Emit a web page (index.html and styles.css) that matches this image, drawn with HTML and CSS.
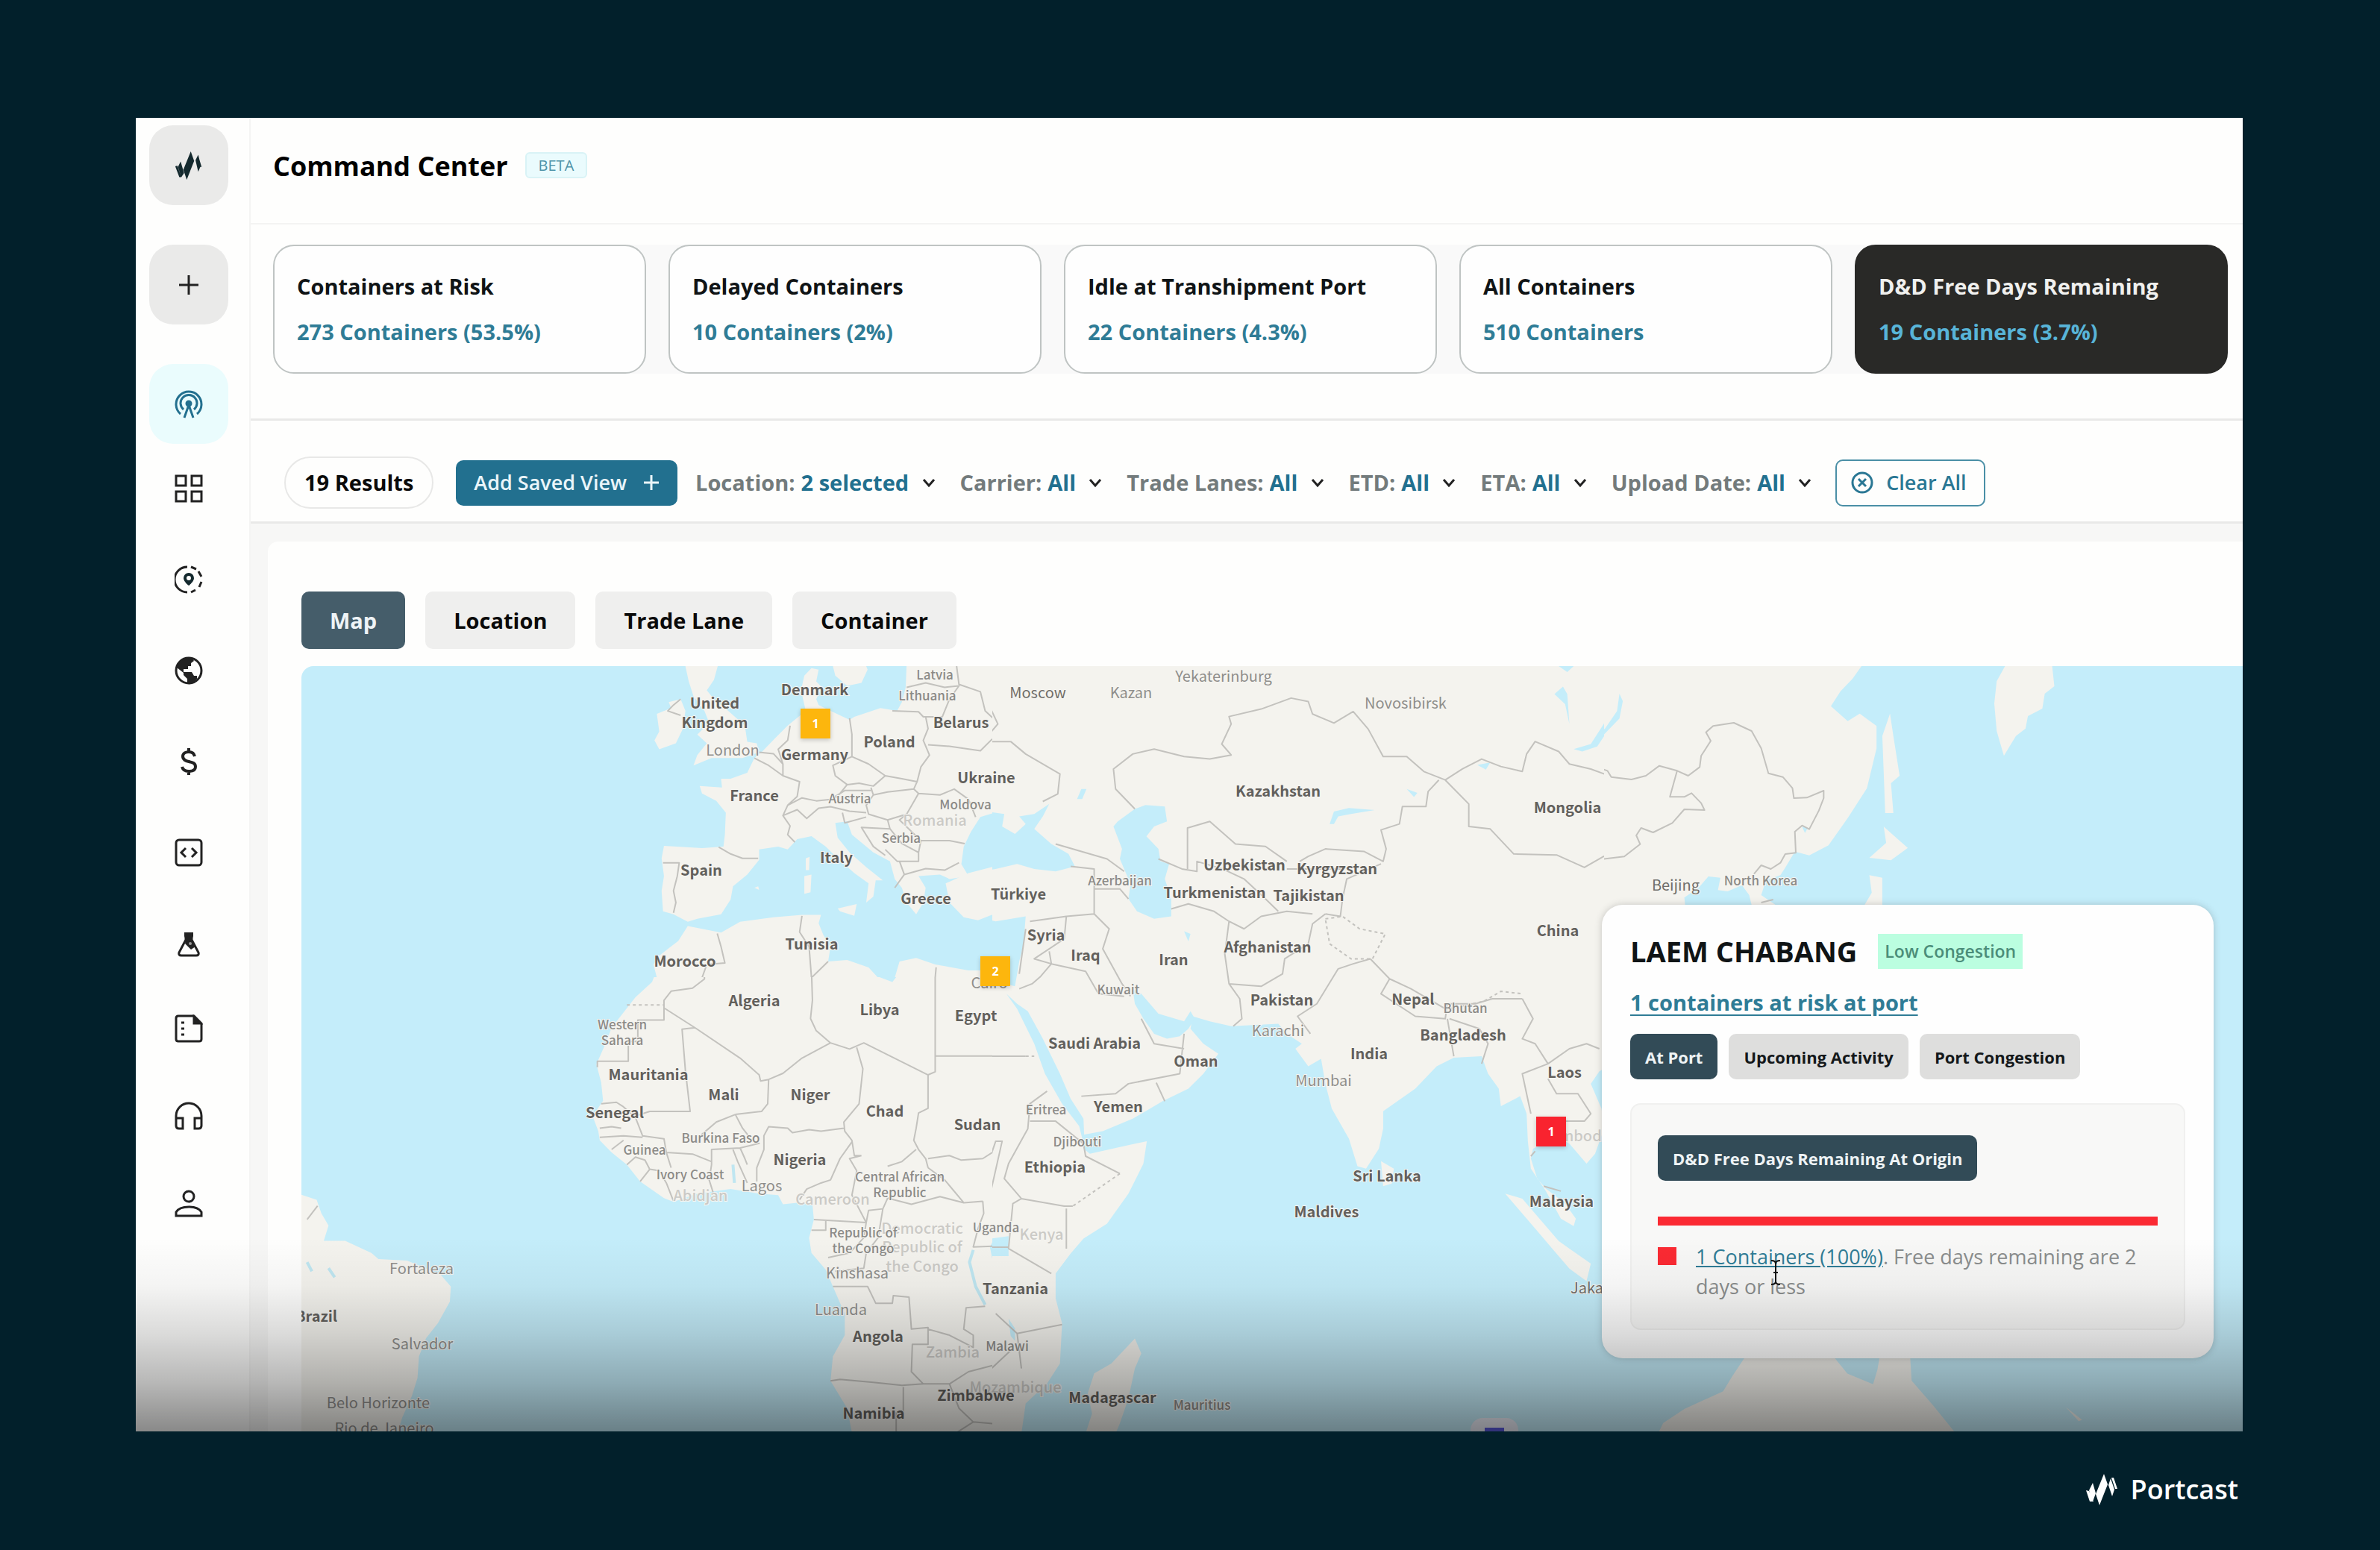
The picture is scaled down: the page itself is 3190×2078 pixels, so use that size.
FILE: index.html
```html
<!DOCTYPE html>
<html lang="en">
<head>
<meta charset="utf-8">
<title>Command Center – Portcast</title>
<link rel="stylesheet" href="styles.css">
</head>
<body>
<div class="app">
  <nav class="sidebar" aria-label="Main">
    <a class="tile" href="#home" aria-label="Home"><svg viewBox="0 0 42 42" class="icon"><path d="M1 22l6 16h3L4 21zM9 15l5 17-4 6-5-15zM24 0l5 14-11 28-5-15zM35 6l5 17-3 0-4-14zM35 30l-4-17 4-8 4 16z" fill="#14292e"/></svg></a>
    <a class="tile" href="#new" aria-label="Add"><svg viewBox="0 0 28 28" class="icon-plus"><path d="M14 1v26M1 14h26" stroke="#222" stroke-width="3"/></svg></a>
    <a class="tile tile-active" href="#command" aria-label="Command Center"><svg viewBox="0 0 38 38" class="icon line"><path d="M8 32A17 17 0 1 1 30 32M12 26A11 11 0 1 1 26 26M13 37l6-17 6 17"/><circle cx="19" cy="18" r="3" fill="currentColor"/></svg></a>
    <div class="nav-group">
      <a href="#board" aria-label="Dashboard"><svg viewBox="0 0 38 38" class="icon line"><path d="M2 2h13v13H2zM23 2h13v13H23zM2 23h13v13H2zM23 23h13v13H23z"/></svg></a>
      <a href="#track" aria-label="Tracking"><svg viewBox="0 0 38 38" class="icon line"><path d="M17 2A17 17 0 0 0 17 36M22 2l7 3M32 8l4 7M36 22l-3 7M28 33l-6 3"/><path d="M19 10a7 7 0 0 0-7 7c0 5 7 10 7 10s7-5 7-10a7 7 0 0 0-7-7zm0 4a3 3 0 1 1 0 6 3 3 0 0 1 0-6z" fill="#14292e" stroke="none"/></svg></a>
      <a href="#world" aria-label="World"><svg viewBox="0 0 38 38" class="icon line"><circle cx="19" cy="19" r="17"/><path d="M3 15C6 6 13 1 24 3l2 3-4 3v4h-4v4h-6v4h11l3 5h4v4l-5 5-8 1v-6l-5-5v-3z" fill="currentColor" stroke="none"/></svg></a>
      <a href="#rates" aria-label="Rates"><svg viewBox="0 0 38 38" class="icon line"><path d="M27 12c-1-4-4-6-8-6s-8 2-8 6 3 6 8 7 9 2 9 7-4 6-9 6-8-2-9-6M19 1v5M19 32v5" stroke-width="4"/></svg></a>
      <a href="#api" aria-label="API"><svg viewBox="0 0 38 38" class="icon line"><rect x="2" y="2" width="34" height="34" rx="4"/><path d="M15 13l-6 6 6 6M23 13l6 6-6 6"/></svg></a>
      <a href="#labs" aria-label="Labs"><svg viewBox="0 0 38 38" class="icon line"><path d="M14 6h10M15 6v8L6 31q-1 4 3 4h20q4 0 3-4L23 14V6"/><path d="M13 4h12v5l-2 5 5 9-6 4-8-8 1-5-2-5z" fill="currentColor" stroke="none"/><circle cx="21" cy="19" r="2" fill="#999" stroke="none"/></svg></a>
    </div>
    <div class="nav-group nav-group-low">
      <a href="#reports" aria-label="Reports"><svg viewBox="0 0 38 38" class="icon line"><path d="M5 2h21l10 10v21q0 3-3 3H5q-3 0-3-3V5q0-3 3-3z"/><path d="M26 3l9 9h-9z" fill="currentColor"/><path d="M9 11h4M9 19h4M9 27h4"/></svg></a>
      <a href="#support" aria-label="Support"><svg viewBox="0 0 38 38" class="icon line"><path d="M2 31V19a17 17 0 0 1 34 0v12M2 22h9v14H6q-4 0-4-4zM36 22h-9v14h5q4 0 4-4z"/></svg></a>
      <a href="#profile" aria-label="Profile"><svg viewBox="0 0 38 38" class="icon line"><circle cx="19" cy="10" r="7"/><path d="M2 36v-5c3-5 10-7 17-7s14 2 17 7v5z"/></svg></a>
    </div>
  </nav>
  <main class="main">
    <header class="topbar"><h1>Command Center</h1><span class="beta">BETA</span></header>
    <section class="summary" aria-label="Summary">
      <div class="cards">
        <button class="card"><span>Containers at Risk</span><span class="value">273 Containers (53.5%)</span></button>
        <button class="card"><span>Delayed Containers</span><span class="value">10 Containers (2%)</span></button>
        <button class="card"><span>Idle at Transhipment Port</span><span class="value">22 Containers (4.3%)</span></button>
        <button class="card"><span>All Containers</span><span class="value">510 Containers</span></button>
        <button class="card card-dark"><span>D&amp;D Free Days Remaining</span><span class="value">19 Containers (3.7%)</span></button>
      </div>
    </section>
    <section class="filters" aria-label="Filters">
      <span class="results">19 Results</span>
      <button class="save">Add Saved View <svg viewBox="0 0 22 22" class="icon-small"><path d="M11 1v20M1 11h20"/></svg></button>
      <div class="filter-list">
        <label class="filter">Location: <select><option>2 selected</option></select><svg viewBox="0 0 18 18" class="chevron"><path d="M2 5l7 8 7-8"/></svg></label>
        <label class="filter">Carrier: <select><option>All</option></select><svg viewBox="0 0 18 18" class="chevron"><path d="M2 5l7 8 7-8"/></svg></label>
        <label class="filter">Trade Lanes: <select><option>All</option></select><svg viewBox="0 0 18 18" class="chevron"><path d="M2 5l7 8 7-8"/></svg></label>
        <label class="filter">ETD: <select><option>All</option></select><svg viewBox="0 0 18 18" class="chevron"><path d="M2 5l7 8 7-8"/></svg></label>
        <label class="filter">ETA: <select><option>All</option></select><svg viewBox="0 0 18 18" class="chevron"><path d="M2 5l7 8 7-8"/></svg></label>
        <label class="filter">Upload Date: <select><option>All</option></select><svg viewBox="0 0 18 18" class="chevron"><path d="M2 5l7 8 7-8"/></svg></label>
      </div>
      <button class="clear"><svg viewBox="0 0 30 30" class="icon-clear"><circle cx="15" cy="15" r="13"/><path d="M10 10l10 10M20 10L10 20"/></svg>Clear All</button>
    </section>
    <div class="content">
      <section class="panel">
        <div class="tabs">
          <button class="tab tab-on">Map</button><button class="tab">Location</button><button class="tab">Trade Lane</button><button class="tab">Container</button>
        </div>
        <div class="map">
          <svg class="world" viewBox="404 893 2602 1026" preserveAspectRatio="xMinYMin slice" role="img" aria-label="World map">
            <!-- Europe and the Mediterranean -->
            <svg x="404" y="893" width="926" height="417" viewBox="38 488 1452 1055" preserveAspectRatio="none">
              <g class="land">
                <path d="M845 488L852 540 862 590 885 640 895 680 870 720 890 750 870 790 862 825 900 800 965 800 1000 780 995 750 975 745 970 690 935 640 905 600 890 570 905 535 913 488ZM785 650L815 630 810 610 835 600 845 640 840 700 825 750 790 770 780 740 790 710ZM1155 488L1160 520 1185 555 1215 545 1228 500 1225 488Z"/>
                <path d="M1310 480L1308 560 1300 610 1290 640 1255 630 1200 660 1190 670 1150 640 1125 620 1120 600 1132 560 1120 540 1125 500 1110 495 1095 520 1088 570 1098 640 1060 690 1035 730 1005 780 990 800 975 850 940 870 920 870 922 900 875 895 880 920 910 945 930 985 928 1060 925 1100 880 1105 800 1098 795 1140 800 1200 795 1250 798 1320 820 1330 850 1355 870 1345 920 1330 940 1280 945 1235 975 1195 1000 1145 1000 1110 1040 1100 1060 1110 1080 1075 1110 1065 1140 1100 1165 1140 1200 1190 1230 1225 1225 1290 1240 1270 1245 1215 1260 1215 1225 1170 1190 1120 1165 1070 1160 1020 1185 1015 1195 1060 1240 1120 1275 1150 1285 1210 1300 1240 1310 1290 1330 1330 1345 1290 1350 1240 1335 1200 1380 1195 1400 1210 1440 1200 1425 1160 1430 1100 1445 1050 1465 1000 1495 985V480Z"/>
                <path d="M1392 1225L1440 1190 1500 1165V1325L1460 1350 1430 1340 1400 1290ZM1165 1310L1205 1295 1200 1335 1170 1320ZM1095 1200L1110 1195 1108 1255 1095 1260ZM1098 1140L1106 1135 1105 1180 1098 1180ZM990 1240l8-5 2 12z"/>
                <path d="M850 1370L920 1392 960 1355 1030 1340 1090 1332 1130 1332 1125 1360 1135 1400 1150 1440 1145 1490 1185 1485 1230 1510 1250 1545H785L778 1500 790 1470 830 1420ZM1285 1545L1295 1490 1330 1478 1370 1500 1440 1520 1495 1520V1545Z"/>
              </g>
              <path class="border" d="M835 600L820 620 808 640 835 655M915 1102L940 1125 965 1140 998 1140M798 1155L832 1155 828 1200 820 1250 825 1290 820 1325M990 800L1020 825 1050 860 1085 880 1080 930 1060 960 1050 995 1065 1030 1060 1060 1075 1085M1000 780L1030 785 1050 820 1050 860M1065 690L1060 740 1040 770 1050 820M1060 960L1090 935 1120 945 1150 940M1050 995L1080 975 1100 1005 1125 970 1150 965 1190 980 1225 985M1190 665L1195 720 1195 795 1155 825 1160 860 1185 890 1165 930 1150 940M1195 795L1230 820 1265 860 1240 895 1210 885 1185 890M1265 860L1300 870 1332 880 1325 905 1270 915 1240 925 1235 900M1350 660L1355 700 1345 740 1358 790 1340 830 1332 880M1280 640L1335 643 1345 660 1385 660 1400 600 1420 555 1390 560 1350 545 1310 560M1415 488L1420 550 1465 575 1475 640 1505 685M1355 755L1400 760 1465 775 1490 735M1240 925L1225 960 1230 990 1270 1010 1310 990 1335 920 1325 905M1335 920L1380 925 1410 905 1440 940 1455 1000M1310 990L1295 1010 1340 1080 1400 1080 1432 1090M1270 1010L1275 1040 1300 1090 1335 1120 1340 1080M1175 985L1180 1020 1225 1000M1275 1040L1215 1035 1240 1100 1265 1130M1265 1110L1290 1150 1335 1150 1335 1120M1295 1150L1305 1195 1285 1240M1305 1195L1350 1175 1390 1180 1420 1155M1150 940L1180 910 1235 910M912 1395L920 1440 928 1495 890 1500 880 1545M1090 1335L1085 1390 1105 1440 1110 1545 1145 1490M1372 1510L1370 1545"/>
            </svg>
            <!-- Atlantic, western and central Africa -->
            <svg x="404" y="1310" width="926" height="609" viewBox="38 24 1452 1492" preserveAspectRatio="none">
              <g class="land">
                <path d="M785 0L775 40 740 90 720 130 690 190 675 250 658 310 668 370 672 430 650 480 662 530 665 560 690 600 722 640 750 695 800 750 820 762 870 735 940 720 1000 735 1040 740 1050 770 1080 765 1112 770 1115 820 1105 880 1110 930 1140 985 1155 1040 1180 1130 1180 1200 1155 1270 1150 1350 1185 1440 1195 1520H1495V0Z"/>
                <path d="M30 735L70 755 80 800 95 840 85 890 130 890 185 930 200 950 260 955 330 1000 352 1040 350 1090 325 1160 300 1210 285 1270 282 1340 270 1400 250 1470 240 1520H30Z"/>
              </g>
              <path class="water" d="M1210 0L1255 25 1280 40 1290 20 1295 0ZM1495 880L1485 910 1490 950H1500Z"/>
              <path class="border" d="M885 0L885 30 860 60 815 70 800 100 800 165 745 165 745 235 725 235 725 300 660 300 660 320M800 125L865 190 960 290 1000 345 1003 365 1020 360 1050 340 1090 290 1150 240M865 190L838 195 845 330 855 465 770 465 740 480M1020 360L1018 440 1005 465 950 475M1110 0L1112 100 1108 160 1120 200 1150 240 1190 260 1220 240 1355 345 1370 335 1370 0M1370 283H1490M1205 255L1218 325 1210 440 1178 500 1180 530 1195 560 1200 610 1215 610M1355 345L1355 455 1335 470 1330 520 1325 560 1335 590 1350 620 1355 650M1178 520L1130 530 1105 525 1070 535 1060 520 1020 515 1010 545 1010 590 995 650 995 695M1195 565L1170 620 1150 690 1130 700 1100 720 1085 755M950 475L910 500 880 540 870 570M950 475L965 520 985 560 1000 570 960 585 900 590 900 640 895 690 905 740M945 590L955 630 975 700M960 585L970 620 975 640M668 440L700 435 715 450 740 485 755 545 800 555 805 600 860 605 900 630M665 520L690 515 710 520M665 550L715 545 755 550M690 590L715 560M722 640L740 615 760 625 770 655 750 695M770 655L790 660 805 700 820 760M805 600L815 650M1215 610L1190 620 1205 660 1195 740 1225 830M1270 645L1300 630 1330 590M1355 650L1390 690 1430 765 1470 760M1270 750L1320 770 1380 745 1430 765M1115 820L1225 830 1230 790 1260 785 1270 750M1140 820L1140 855 1110 855M1225 830L1220 880 1190 930 1145 945M1260 785L1250 880 1225 930 1220 980 1160 990M1355 620L1400 610 1425 625 1470 620 1490 600M1470 760L1472 800 1460 850 1450 910 1490 908M1155 1040L1228 1040 1245 1095 1280 1095 1282 1070 1315 1075 1320 1180 1355 1175 1355 1230 1322 1230 1320 1320 1345 1360 1300 1365 1240 1355 1170 1345 1150 1350M1355 1180L1400 1200 1450 1240 1450 1200 1430 1180 1435 1110 1475 1105M1345 1360L1400 1360 1440 1320 1490 1300M1303 1370L1303 1455 1288 1455 1288 1520M1400 1360L1420 1440 1450 1485 1490 1490M1415 1520L1450 1485M72 775L50 820"/>
              <path class="border dashed" d="M722 115H800"/>
              <path class="river" d="M1450 920L1442 960 1455 1040 1475 1100M945 640L948 700M50 960L60 990M95 980L108 1010"/>
            </svg>
            <!-- Western and southern Asia, eastern Africa -->
            <svg x="1330" y="893" width="820" height="1026" viewBox="52 34 1429 1532" preserveAspectRatio="none">
              <g class="land">
                <path d="M0 0H1500V830L1470 845 1450 870 1475 920 1481 960 1460 1010 1440 1030 1400 990 1370 975 1340 990 1315 1000 1310 1020 1325 1060 1345 1080 1390 1110 1415 1140 1410 1155 1380 1140 1345 1085 1310 1040 1303 985 1300 930 1285 895 1240 915 1235 880 1210 850 1195 815 1130 818 1090 835 1040 880 965 925 965 960 955 1000 925 1040 905 1035 885 980 845 920 830 870 820 820 790 835 760 800 775 790 740 770 720 750 610 755 560 745 520 735 515 760 545 790 580 810 545 850 510 880 450 905 380 940 310 965 265 972 265 1000 280 1010 360 995 413 985 405 1030 370 1090 320 1150 265 1180 235 1210 200 1250 200 1300 215 1350 210 1430 180 1470 130 1510 120 1570H0Z"/>
                <path d="M1250 1090L1290 1100 1330 1140 1375 1185 1400 1200 1450 1230 1440 1265 1400 1240 1360 1200 1320 1160 1280 1120ZM960 1025L990 1040 985 1070 965 1075ZM385 1380L400 1410 385 1440 370 1500 350 1550 340 1570 270 1570 285 1530 275 1490 290 1450 330 1430Z"/>
              </g>
              <g class="water">
                <path d="M0 350L40 325 80 330 75 355 105 370 130 350 115 335 150 330 185 310 170 335 150 360 190 390 230 410 245 435 200 445 150 440 110 430 60 440 30 445 0 440ZM0 535L60 545 130 535 125 590 115 625 105 675 60 665 20 670 0 665Z"/>
                <path d="M385 320L410 312 455 315 460 345 430 355 412 375 440 400 445 425 465 430 455 460 470 500 470 535 430 540 390 525 370 500 375 470 350 420 355 400 335 355 345 345ZM380 680L400 690 440 730 500 745 515 725 525 740 510 760 490 775 460 780 430 770 405 740 385 710ZM85 690L110 710 135 725 170 780 210 850 235 900 265 940 268 1000 255 955 215 910 175 850 150 790 110 720Z"/>
                <path d="M840 350L850 325 885 318 945 322 890 330 860 335 850 350ZM1410 200L1450 190 1480 150 1520 85 1525 115 1500 150 1465 195 1430 205ZM1365 90L1385 75 1395 90 1400 150 1390 110ZM50 1180L90 1175 90 1215 50 1215ZM250 300l10-20 12 0-10 20zM500 565l15 5-5 15zM1185 232l30-5-10 14zM1020 280l25 8-8 8zM90 1340l15 20 0 25-10-10zM1375 34h35l-15 12z"/>
              </g>
              <path class="border" d="M0 80L30 85 65 150 50 165M40 185L95 185 130 210 210 250 205 290 170 305M385 320L340 280 335 240 380 210 430 200 500 215 560 220 610 212 588 190 610 150 605 135 680 120 750 98 790 105 800 130 850 148 895 125 930 160 965 215 1020 215 1060 245 1110 262M1095 262L1070 285 1065 315 1010 315 1003 350 960 362 972 400 965 425 920 405 830 400 790 415 770 425M508 440L508 358 560 345 620 390 690 395 740 425M440 420L495 440 530 445 530 425 590 440 640 460 690 500 720 525M470 520L510 510 570 525 605 545 595 610 605 670 630 700 635 740 615 755M605 670L680 675 730 650 735 620 790 590 800 550 830 530M605 545L640 560 680 535 740 525 800 530M740 440L800 440 870 440M830 530L865 535 870 500 880 460 960 430M935 620L895 630 860 640 810 710 765 735 795 770M935 620L980 660 960 690 1040 735 1110 740 1115 710 1180 710 1220 700 1290 700M980 660L1030 680 1110 720M1290 700L1315 740 1290 780 1320 790 1350 830M1115 740L1130 815M1120 740L1190 760 1210 790 1195 830M1310 930L1290 850 1350 830 1400 800 1440 790 1470 800M1350 860L1370 890 1420 890 1450 930 1435 945 1380 945M1110 262L1150 240 1195 220 1240 235 1290 245 1300 210 1320 185 1375 205 1400 230 1450 240 1520 262M1110 262L1165 310 1165 355 1215 360 1270 410 1370 412 1435 437 1480 415 1540 400M140 545L225 535 290 530 325 560 310 600 355 670 375 695M225 535L220 580 150 620 190 630 270 645 300 690 360 695M185 605L190 630 165 655 145 670 115 680M130 560L115 650M200 390L260 405 320 420 360 445M235 435L290 440 290 480 350 480 370 500M290 480L290 530M260 895L340 890 370 870 490 850 500 770M435 868L455 905M400 740L430 790 500 800M180 885L140 910 135 960 90 1030 80 1060 120 1100 220 1115 240 1115M140 945L200 945 265 990 270 1015 350 1050M225 1120V1200M50 1080L75 985 60 985 50 1010M120 1100L100 1110 90 1200 190 1250M50 1197H90M110 1370L215 1352M60 1330L110 1370 120 1440M50 1440L100 1400M50 815H130M1310 1015L1320 1005M1340 1075L1380 1085"/>
              <path class="border dashed" d="M830 540L870 535 910 560 970 570 940 620 890 620 840 590ZM350 1050L240 1115M1120 720L1200 705 1240 685 1290 690M130 815H150"/>
            </svg>
            <!-- Eastern Asia and Kamchatka -->
            <svg x="2150" y="893" width="856" height="367" viewBox="233 69 1329 1101" preserveAspectRatio="none">
              <g class="land">
                <path d="M200 60H772L750 120 725 170 705 230 740 290 765 260 800 310 800 400 780 560 740 680 700 790 660 830 630 815 610 880 600 910 570 930 560 990 590 1030V1180H540V1030L535 990 520 950 490 975 470 970 475 920 450 915 430 960 400 1000 410 1180H200Z"/>
                <path d="M828 260L835 350 848 510 830 540 835 660 818 660 815 500 812 350ZM815 715L865 800 830 850 785 840 820 780ZM785 910L812 920 812 1100 775 1030 790 980ZM1070 60H1165L1170 150 1150 180 1145 240 1115 270 1110 320 1090 350 1065 430 1050 330 1045 220 1050 130Z"/>
              </g>
              <path class="water" d="M170 405L190 375 235 320 260 250 265 180 272 210 265 280 235 340 200 405ZM645 715l12 5-6 20z"/>
              <path class="border" d="M200 462L240 490 248 515 290 525 320 510 348 470 385 490 370 595 400 595 415 580 435 620 442 648 400 645 375 700 335 738 310 720 300 750 308 785 275 835 230 845 190 880M385 490L408 510 432 475 435 430 455 370 445 335 460 310 503 297 540 330 560 400 575 500 605 515 625 560 628 600 655 598 690 570 690 600 680 650 660 725 645 710 630 735 632 820 610 825 600 860 580 885 560 870 545 905M560 1020L585 1008"/>
            </svg>
            <!-- Northern Australia -->
            <svg x="2150" y="1260" width="856" height="659" viewBox="52 148 1491 1396" preserveAspectRatio="none">
              <path class="land" d="M390 1300L380 1335 350 1390 330 1430 240 1480 190 1520 180 1545H870L820 1470 770 1400 765 1300H700L690 1370 680 1410 620 1380 580 1320V1300ZM1130 1475l30 40 8-4z"/>
            </svg>
            <g class="faded">
              <text x="1253" y="1098">Romania</text><text x="939" y="1601">Abidjan</text><text x="1116" y="1606">Cameroon</text><text x="2115" y="1521">Cambodia</text><text x="1236" y="1645">Democratic</text><text x="1236" y="1670">Republic of</text><text x="1236" y="1696">the Congo</text><text x="1396" y="1653">Kenya</text><text x="1277" y="1811">Zambia</text><text x="1361" y="1858">Mozambique</text>
            </g>
            <g class="country">
              <text x="1092" y="923">Denmark</text><text x="958" y="941">United</text><text x="958" y="967">Kingdom</text><text x="1092" y="1010">Germany</text><text x="1192" y="993">Poland</text><text x="1288" y="967">Belarus</text><text x="1322" y="1041">Ukraine</text><text x="1011" y="1065">France</text><text x="1713" y="1059">Kazakhstan</text><text x="2101" y="1081">Mongolia</text><text x="1121" y="1148">Italy</text><text x="940" y="1165">Spain</text><text x="1241" y="1203">Greece</text><text x="1365" y="1197">Türkiye</text><text x="1668" y="1158">Uzbekistan</text><text x="1792" y="1163">Kyrgyzstan</text><text x="1628" y="1195">Turkmenistan</text><text x="1754" y="1199">Tajikistan</text><text x="2088" y="1246">China</text><text x="1402" y="1252">Syria</text><text x="1455" y="1279">Iraq</text><text x="1573" y="1285">Iran</text><text x="1699" y="1268">Afghanistan</text><text x="1088" y="1264">Tunisia</text><text x="918" y="1287">Morocco</text><text x="1011" y="1340">Algeria</text><text x="1179" y="1352">Libya</text><text x="1308" y="1360">Egypt</text><text x="1718" y="1339">Pakistan</text><text x="1894" y="1338">Nepal</text><text x="1961" y="1386">Bangladesh</text><text x="1835" y="1411">India</text><text x="1467" y="1397">Saudi Arabia</text><text x="1603" y="1421">Oman</text><text x="869" y="1439">Mauritania</text><text x="970" y="1466">Mali</text><text x="1086" y="1466">Niger</text><text x="1186" y="1488">Chad</text><text x="1310" y="1506">Sudan</text><text x="824" y="1490">Senegal</text><text x="1499" y="1482">Yemen</text><text x="1414" y="1563">Ethiopia</text><text x="1072" y="1553">Nigeria</text><text x="1859" y="1575">Sri Lanka</text><text x="1778" y="1623">Maldives</text><text x="2093" y="1609">Malaysia</text><text x="2097" y="1436">Laos</text><text x="1361" y="1726">Tanzania</text><text x="1177" y="1790">Angola</text><text x="1308" y="1869">Zimbabwe</text><text x="1171" y="1893">Namibia</text><text x="1491" y="1872">Madagascar</text><text x="424" y="1763">Brazil</text>
            </g>
            <g class="city">
              <text x="982" y="1004">London</text><text x="1391" y="927" class="dark">Moscow</text><text x="1516" y="927">Kazan</text><text x="1640" y="905">Yekaterinburg</text><text x="1884" y="941">Novosibirsk</text><text x="2246" y="1185" class="dark">Beijing</text><text x="1326" y="1316">Cairo</text><text x="1713" y="1380">Karachi</text><text x="1774" y="1447">Mumbai</text><text x="1021" y="1588">Lagos</text><text x="1149" y="1705">Kinshasa</text><text x="1127" y="1754">Luanda</text><text x="2140" y="1725" class="dark">Jakarta</text><text x="565" y="1699">Fortaleza</text><text x="566" y="1800">Salvador</text><text x="507" y="1879">Belo Horizonte</text><text x="515" y="1913">Rio de Janeiro</text>
            </g>
            <g class="minor">
              <text x="1253" y="903">Latvia</text><text x="1243" y="931">Lithuania</text><text x="1139" y="1069">Austria</text><text x="1294" y="1077">Moldova</text><text x="1208" y="1122">Serbia</text><text x="1501" y="1179">Azerbaijan</text><text x="2360" y="1179">North Korea</text><text x="1499" y="1325">Kuwait</text><text x="1964" y="1350">Bhutan</text><text x="834" y="1372">Western</text><text x="834" y="1393">Sahara</text><text x="1402" y="1486">Eritrea</text><text x="1444" y="1529">Djibouti</text><text x="966" y="1524">Burkina Faso</text><text x="864" y="1540">Guinea</text><text x="925" y="1573">Ivory Coast</text><text x="1206" y="1576">Central African</text><text x="1206" y="1597">Republic</text><text x="1157" y="1651">Republic of</text><text x="1157" y="1672">the Congo</text><text x="1335" y="1644">Uganda</text><text x="1350" y="1803">Malawi</text><text x="1611" y="1882">Mauritius</text>
            </g>
          </svg>
          <button class="pin pin-de">1</button>
          <button class="pin pin-eg">2</button>
          <button class="pin pin-th">1</button>
          <span class="vessel"></span>
          <article class="popup">
            <div class="popup-head"><h2>LAEM CHABANG</h2><span class="congestion">Low Congestion</span></div>
            <a class="risk" href="#risk">1 containers at risk at port</a>
            <div class="chips"><button class="chip chip-on">At Port</button><button class="chip">Upcoming Activity</button><button class="chip">Port Congestion</button></div>
            <div class="detail">
              <button class="chip chip-on">D&amp;D Free Days Remaining At Origin</button>
              <div class="bar"></div>
              <div class="legend"><span class="swatch"></span><p><a href="#containers">1 Containers (100%)</a>. Free days remaining are 2 days or less</p></div>
              <svg class="cursor" viewBox="0 0 14 34"><path d="M1 1q6 0 6 4v24q0 4-6 4M13 1q-6 0-6 4M7 29q0 4 6 4M4 17h6"/></svg>
            </div>
          </article>
        </div>
      </section>
    </div>
  </main>
</div>
<footer class="brand"><svg viewBox="0 0 42 42" class="brand-mark"><path d="M0 22l4 1 6 14H5zM9 12l4 14-4 11L4 22zM24 0l5 14-11 28-5-15zM34 5h3l5 15h-3zM33 6l5 15-3 9-5-15z"/></svg><span>Portcast</span></footer>
</body>
</html>
```
FILE: styles.css
```css
* { box-sizing: border-box; }

body {
  margin: 0;
  min-height: 100vh;
  padding: 158px 184px 0 182px;
  display: flex;
  flex-direction: column;
  background: #02202b;
  color: #101416;
  font-family: "Open Sans", "Noto Sans", sans-serif;
  font-size: 29px;
  font-weight: 700;
  line-height: 40px;
}

button, select {
  font: inherit;
  color: inherit;
  border: 0;
  margin: 0;
  padding: 0;
  background: none;
}

h1, h2, p { margin: 0; }
svg { display: block; flex: none; }

.app {
  position: relative;
  flex: 1;
  display: flex;
  background: #fefefd;
  overflow: hidden;
}

.app::after {
  content: "";
  position: absolute;
  inset: auto 0 0 0;
  height: 260px;
  background: linear-gradient(rgba(0, 0, 0, 0), rgba(0, 0, 0, .04) 25%, rgba(0, 0, 0, .14) 50%, rgba(0, 0, 0, .28) 75%, rgba(0, 0, 0, .46));
  pointer-events: none;
}

/* Sidebar */
.sidebar {
  flex: none;
  width: 154px;
  padding: 10px 28px 0 18px;
  display: flex;
  flex-direction: column;
  align-items: center;
  gap: 53px;
  border-right: 2px solid #f4f4f3;
  color: #222;
}

.tile {
  flex: none;
  width: 106px;
  height: 107px;
  display: flex;
  align-items: center;
  justify-content: center;
  border-radius: 32px;
  background: #eaeae9;
  color: #222;
}

.tile-active { background: #eafcfd; color: #23708f; }
.nav-group { display: flex; flex-direction: column; gap: 84px; margin-top: -12px; }
.nav-group a { color: #222; }
.nav-group-low { gap: 79px; margin-top: 23px; }
.icon { width: 38px; height: 38px; }
.icon-plus { width: 28px; height: 28px; }
.line { fill: none; stroke: currentColor; stroke-width: 3; }

/* Header */
.main { flex: 1; min-width: 0; display: flex; flex-direction: column; }

.topbar {
  height: 143px;
  padding: 0 30px 12px;
  display: flex;
  align-items: center;
  gap: 23px;
  border-bottom: 2px solid #f4f4f3;
}

h1 { font-size: 36px; font-weight: 700; line-height: 48px; color: #000; }

.beta {
  padding: 0 16px;
  margin-bottom: 2px;
  border: 2px solid #d9f3f6;
  border-radius: 6px;
  background: #eafbfd;
  color: #4f93a8;
  font-size: 20px;
  font-weight: 400;
  line-height: 31px;
}

/* Summary cards */
.summary { padding: 27px 20px 60px 30px; border-bottom: 3px solid #e9e9e8; }
.cards { display: grid; grid-template-columns: repeat(5, 1fr); gap: 30px; background: linear-gradient(90deg, #fefefd 1%, #f9f9f9 5%, #f9f9f9 95%, #fefefd 99%); }

.card {
  height: 173px;
  padding: 0 30px;
  display: flex;
  flex-direction: column;
  justify-content: center;
  gap: 21px;
  border: 2px solid #bfc4c3;
  border-radius: 28px;
  background: #fefefe;
  text-align: left;
}

.value { color: #2f7c96; }
.card-dark { background: #292927; border-color: #292927; color: #f0f0ee; }
.card-dark .value { color: #58b4d8; }

/* Filters */
.filters {
  height: 138px;
  padding: 31px 20px 0 45px;
  display: flex;
  align-items: center;
  border-bottom: 3px solid #e9e9e8;
}

.results {
  padding: 0 25px;
  border: 2px solid #e8e8e7;
  border-radius: 35px;
  line-height: 66px;
  color: #0a0a0a;
}

.save {
  height: 61px;
  margin-left: 30px;
  padding: 0 24px;
  display: flex;
  align-items: center;
  gap: 22px;
  border-radius: 10px;
  background: #22708f;
  color: #eaf5f9;
  font-size: 27px;
  font-weight: 600;
}

.icon-small { width: 22px; height: 22px; stroke: currentColor; stroke-width: 3; }
.filter-list { display: flex; gap: 33px; margin: 0 32px 0 24px; }
.filter { display: flex; align-items: center; gap: 8px; color: #737b7c; }
.filter select { appearance: none; color: #22708f; }
.chevron { width: 18px; height: 18px; margin-left: 9px; fill: none; stroke: #222; stroke-width: 3; }

.clear {
  height: 63px;
  padding: 0 23px 0 19px;
  display: flex;
  align-items: center;
  gap: 17px;
  border: 2px solid #4a8fa6;
  border-radius: 10px;
  color: #2a7794;
  font-size: 27px;
  font-weight: 600;
}

.icon-clear { width: 30px; height: 30px; fill: none; stroke: currentColor; stroke-width: 3; }

/* Map panel */
.content { flex: 1; display: flex; padding: 24px 0 0 23px; background: #f7f7f6; }
.panel { flex: 1; min-width: 0; display: flex; flex-direction: column; padding: 67px 0 0 45px; border-radius: 14px 0 0 0; background: #fefefd; }
.tabs { display: flex; gap: 27px; margin-bottom: 23px; }

.tab {
  height: 77px;
  padding: 0 38px;
  border-radius: 10px;
  background: #efefee;
  color: #0a0a0a;
}

.tab-on { background: #455d6a; color: #eef3f6; }

.map {
  position: relative;
  flex: 1;
  min-height: 800px;
  border-radius: 16px 0 0 0;
  background: #c4edfa;
  overflow: hidden;
}

.world { position: absolute; inset: 0; width: 100%; height: 100%; }
.land { fill: #f4f3ee; }
.water { fill: #c4edfa; }
.border, .river { fill: none; stroke: #c3c2be; stroke-width: 2px; vector-effect: non-scaling-stroke; stroke-linejoin: round; }
.dashed { stroke-dasharray: 4 4; }
.river { stroke: #bfe6f1; stroke-width: 4px; }

.world text {
  font-family: "Noto Sans CJK JP", "Noto Sans", sans-serif;
  text-anchor: middle;
  dominant-baseline: central;
  paint-order: stroke;
  stroke: #f6f5f1;
  stroke-width: 2px;
}

.country text { font-size: 20px; font-weight: 700; fill: #62605c; }
.city text { font-size: 20px; font-weight: 400; fill: #8f8e8b; }
.city .dark { fill: #6f6e6a; }
.minor text { font-size: 17px; font-weight: 500; fill: #8b8a87; }
.faded text { font-size: 20px; font-weight: 500; fill: #cbcac6; }

.pin {
  position: absolute;
  width: 40px;
  height: 40px;
  background: #fdb60d;
  box-shadow: 0 2px 6px rgba(0, 0, 0, .2);
  color: #fff;
  font-size: 16px;
  line-height: 40px;
}

.pin-de { left: 669px; top: 57px; }
.pin-eg { left: 910px; top: 389px; }
.pin-th { left: 1655px; top: 604px; background: #f9232f; }

.vessel {
  position: absolute;
  left: 1567px;
  bottom: -32px;
  width: 64px;
  height: 50px;
  border-radius: 16px;
  background: linear-gradient(#5b5be0, #5b5be0) center 13px / 26px 10px no-repeat #eceef8;
}

/* Port popup */
.popup {
  position: absolute;
  right: 39px;
  top: 320px;
  width: 820px;
  padding: 38px;
  border-radius: 28px;
  background: #fefefe;
  box-shadow: 0 0 10px rgba(60, 60, 60, .25);
}

.popup-head { display: flex; align-items: center; gap: 28px; line-height: 48px; }
h2 { font-size: 38px; font-weight: 700; }
.congestion { padding: 0 9px; background: #bbfee0; color: #4b8d79; font-size: 23px; font-weight: 600; line-height: 47px; }
.risk { display: block; margin-top: 25px; color: #2f7c96; text-underline-offset: 5px; }
.chips { display: flex; gap: 15px; margin-top: 22px; }

.chip {
  height: 61px;
  padding: 0 20px;
  border-radius: 10px;
  background: #dededd;
  color: #14181a;
  font-size: 22px;
}

.chip-on { background: #324b57; color: #eef3f5; }

.detail {
  position: relative;
  margin-top: 32px;
  padding: 41px 35px 36px;
  border: 2px solid #f0f0ef;
  border-radius: 14px;
  background: #f8f8f7;
}

.bar { height: 12px; margin-top: 48px; background: #fb2a33; }
.legend { display: flex; gap: 26px; margin-top: 22px; color: #8a8d8d; font-size: 27px; font-weight: 400; }
.legend a { color: #2f7c96; }
.swatch { flex: none; width: 25px; height: 24px; margin-top: 7px; background: #fb2a33; }
.cursor { position: absolute; left: 186px; top: 208px; width: 14px; height: 34px; fill: none; stroke: #111; stroke-width: 2; }

/* Brand */
.brand {
  height: 159px;
  padding: 0 6px 3px 0;
  display: flex;
  align-items: center;
  justify-content: flex-end;
  gap: 18px;
  color: #fff;
  font-size: 36px;
  font-weight: 600;
}

.brand-mark { width: 42px; height: 42px; fill: #fff; }
```
